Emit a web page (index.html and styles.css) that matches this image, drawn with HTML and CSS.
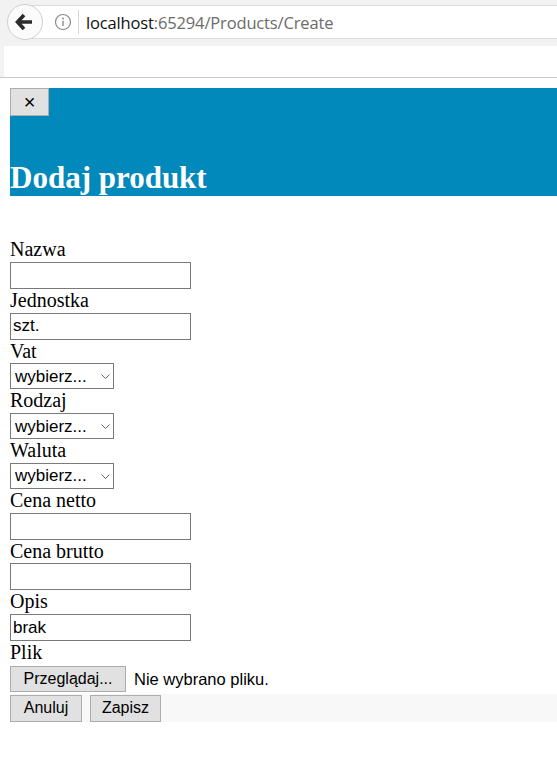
FILE: index.html
```html
<!DOCTYPE html>
<html lang="pl">
<head>
  <meta charset="UTF-8">
  <title>Dodaj produkt</title>
  <link rel="stylesheet" href="styles.css">
</head>
<body>

  <div class="chrome">
    <div class="toolbar">
      <div class="back">
        <svg width="20" height="20" viewBox="0 0 20 20">
          <path d="M9 3 L2.5 10 L9 17 M3 10 H17" fill="none" stroke="#2b2b2b" stroke-width="3.6" stroke-linejoin="miter"/>
        </svg>
      </div>
      <div class="urlbar">
        <svg class="info" width="18" height="18" viewBox="0 0 18 18">
          <circle cx="9" cy="9" r="7.5" fill="none" stroke="#8a8a8a" stroke-width="1.2"/>
          <circle cx="9" cy="5.6" r="1" fill="#8a8a8a"/>
          <path d="M9 7.8 V13" stroke="#8a8a8a" stroke-width="1.4"/>
        </svg>
        <span class="sep"></span>
        <span class="url"><b>localhost</b>:65294/Products/Create</span>
      </div>
    </div>
    <div class="notice"></div>
  </div>

  <div class="page">
    <div class="header">
      <button class="close">&times;</button>
      <h2>Dodaj produkt</h2>
    </div>

    <form class="form">
      <label>Nazwa</label>
      <input type="text">
      <label>Jednostka</label>
      <input type="text" value="szt.">
      <label>Vat</label>
      <select><option>wybierz...</option></select>
      <label>Rodzaj</label>
      <select><option>wybierz...</option></select>
      <label>Waluta</label>
      <select><option>wybierz...</option></select>
      <label>Cena netto</label>
      <input type="text">
      <label>Cena brutto</label>
      <input type="text">
      <label>Opis</label>
      <input type="text" value="brak">
      <label>Plik</label>
      <div class="file">
        <button type="button">Przeglądaj...</button>
        <span>Nie wybrano pliku.</span>
      </div>
      <div class="footer">
        <button type="button">Anuluj</button>
        <button type="button">Zapisz</button>
      </div>
    </form>
  </div>

</body>
</html>
```

FILE: styles.css
```css
body {
  margin: 0;
  background: #fff;
  font-family: "Liberation Serif", serif;
  font-size: 20px;
  color: #000;
}

/* browser bar */
.chrome {
  background: #f2f2f2;
  border-bottom: 1px solid #c9c9c9;
}
.toolbar {
  position: relative;
  height: 46px;
  padding-top: 5px;
  box-sizing: border-box;
}
.urlbar {
  display: flex;
  align-items: center;
  height: 34px;
  margin-left: 24px;
  padding-left: 30px;
  background: #fff;
  border-top: 1px solid #dcdcdc;
  border-bottom: 1px solid #dcdcdc;
  box-sizing: border-box;
}
.back {
  position: absolute;
  left: 7px;
  top: 4px;
  width: 36px;
  height: 36px;
  box-sizing: border-box;
  border: 1px solid #cfcfcf;
  border-radius: 50%;
  background: #fbfbfb;
  display: flex;
  align-items: center;
  justify-content: center;
  z-index: 1;
}
.sep {
  width: 1px;
  height: 24px;
  background: #d6d6d6;
  margin: 0 7px 0 6px;
}
.url {
  font-family: "Open Sans", sans-serif;
  font-size: 16.5px;
  color: #6b6b6b;
  letter-spacing: -0.15px;
}
.url b {
  font-weight: normal;
  color: #111;
}
.notice {
  height: 31px;
  margin-left: 4px;
  background: #fff;
}

/* page */
.page {
  padding: 10px 0 0 10px;
}
.header {
  background: #0089ba;
  color: #fff;
  height: 108px;
  box-sizing: border-box;
}
.header h2 {
  margin: 45px 0 0;
  font-size: 31px;
  line-height: 34px;
}
button {
  font-family: "Liberation Sans", sans-serif;
  font-size: 16px;
  color: #000;
  background: #e1e1e1;
  border: 1px solid #adadad;
  padding: 0;
  margin: 0;
}
.close {
  display: block;
  width: 39px;
  height: 28px;
  font-size: 20px;
  line-height: 1;
}

.form {
  display: flex;
  flex-direction: column;
  align-items: flex-start;
  margin-top: 42px;
}
.form label {
  line-height: 23.75px;
}
.form input {
  width: 181px;
  height: 27px;
  box-sizing: border-box;
  border: 1px solid #7a7a7a;
  padding: 0 2px;
  margin: 0;
  font-family: "Liberation Sans", sans-serif;
  font-size: 17px;
}
.form select {
  appearance: none;
  -webkit-appearance: none;
  width: 104px;
  height: 26px;
  margin: 0;
  box-sizing: border-box;
  border: 1px solid #7a7a7a;
  border-radius: 0;
  background: #fff url("data:image/svg+xml,%3Csvg xmlns='http://www.w3.org/2000/svg' width='9' height='5'%3E%3Cpath d='M0.5 0.5 L4.5 4.5 L8.5 0.5' fill='none' stroke='%23666' stroke-width='1'/%3E%3C/svg%3E") no-repeat 90px 10px;
  padding: 0 4px;
  font-family: "Liberation Sans", sans-serif;
  font-size: 17px;
  color: #000;
}
.file {
  display: flex;
  align-items: center;
  gap: 8px;
  height: 29px;
  padding: 1px 0 1px;
  box-sizing: border-box;
}
.file button {
  width: 116px;
  height: 26px;
}
.file span {
  font-family: "Liberation Sans", sans-serif;
  font-size: 16.5px;
}
.footer {
  align-self: stretch;
  display: flex;
  gap: 8px;
  background: #f8f8f8;
  padding-top: 1px;
  height: 28px;
  box-sizing: border-box;
}
.footer button {
  height: 27px;
  width: 72px;
}
.footer button + button {
  width: 71px;
}
```
